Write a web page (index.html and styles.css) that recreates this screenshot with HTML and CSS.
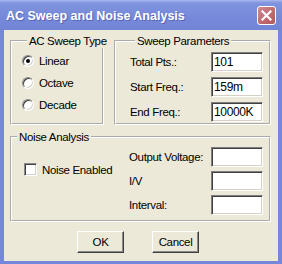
FILE: index.html
```html
<!DOCTYPE html>
<html lang="en">
<head>
    <meta charset="UTF-8">
    <title>AC Sweep and Noise Analysis</title>
    <link rel="stylesheet" href="styles.css">
</head>
<body>

<div class="window">
    <div class="titlebar">
        <span class="title">AC Sweep and Noise Analysis</span>
        <span class="close">
            <svg width="11" height="11" viewBox="0 0 11 11">
                <path d="M1.5 1.5 L9.5 9.5 M9.5 1.5 L1.5 9.5" stroke="#fff" stroke-width="2.2" stroke-linecap="square"/>
            </svg>
        </span>
    </div>

    <div class="client">
        <div class="top-row">
            <fieldset class="group sweep-type">
                <legend>AC Sweep Type</legend>
                <div class="radio-row"><span class="radio checked"></span>Linear</div>
                <div class="radio-row"><span class="radio"></span>Octave</div>
                <div class="radio-row"><span class="radio"></span>Decade</div>
            </fieldset>

            <fieldset class="group sweep-params">
                <legend>Sweep Parameters</legend>
                <div class="field-row"><span>Total Pts.:</span><span class="textbox">101</span></div>
                <div class="field-row"><span>Start Freq.:</span><span class="textbox">159m</span></div>
                <div class="field-row"><span>End Freq.:</span><span class="textbox">10000K</span></div>
            </fieldset>
        </div>

        <fieldset class="group noise">
            <legend>Noise Analysis</legend>
            <div class="noise-body">
                <div class="noise-left"><span class="checkbox"></span>Noise Enabled</div>
                <div class="noise-right">
                    <div class="field-row"><span>Output Voltage:</span><span class="textbox"></span></div>
                    <div class="field-row"><span>I/V</span><span class="textbox"></span></div>
                    <div class="field-row"><span>Interval:</span><span class="textbox"></span></div>
                </div>
            </div>
        </fieldset>

        <div class="buttons">
            <button class="btn">OK</button>
            <button class="btn">Cancel</button>
        </div>
    </div>
</div>

</body>
</html>
```

FILE: styles.css
```css
* {
    box-sizing: border-box;
}

body {
    margin: 0;
    padding: 0;
    font-family: 'Liberation Sans', Arial, sans-serif;
    font-size: 11.5px;
    letter-spacing: -0.35px;
    color: #000;
    white-space: nowrap;
}

.window {
    width: 282px;
    height: 264px;
    background-color: #7487d8;
    display: flex;
    flex-direction: column;
}

.titlebar {
    height: 30px;
    display: flex;
    align-items: center;
    justify-content: space-between;
    padding: 1px 6px 0 6px;
    background: linear-gradient(#a9b8ee 0, #8093de 3px, #7689d9 60%, #7184d6 100%);
}

.title {
    font-weight: bold;
    font-size: 12.5px;
    letter-spacing: 0;
    color: #fff;
    text-shadow: 1px 1px #5666b4;
}

.close {
    width: 19px;
    height: 19px;
    border: 1px solid #fff;
    border-radius: 3px;
    background: linear-gradient(135deg, #d08a92, #c0666f 60%, #b25a62);
    display: flex;
    align-items: center;
    justify-content: center;
}

.client {
    flex: 1;
    margin: 0 4px 3px 4px;
    background-color: #ece9d8;
    padding: 4px 0 0 6px;
}

.top-row {
    display: flex;
    gap: 10px;
    height: 91px;
}

.group {
    margin: 0;
    padding: 0;
    min-width: 0;
    border: 2px groove #fff;
}

.group legend {
    margin-left: 5px;
    padding: 0 2px;
    line-height: 14px;
}

.sweep-type {
    width: 94px;
    padding: 2px 0 0 10px;
}

.radio-row {
    height: 22px;
    display: flex;
    align-items: center;
    gap: 5px;
}

.radio {
    width: 12px;
    height: 12px;
    border-radius: 50%;
    background-color: #fff;
    border: 1px solid;
    border-color: #8a8a8a #fff #fff #8a8a8a;
    box-shadow: inset 1px 1px #404040, inset -1px -1px #d4d0c8;
    display: flex;
    align-items: center;
    justify-content: center;
}

.radio.checked::after {
    content: '';
    width: 4px;
    height: 4px;
    border-radius: 50%;
    background-color: #000;
}

.sweep-params {
    width: 157px;
    padding: 4px 6px 0 14px;
    display: flex;
    flex-direction: column;
    gap: 5px;
}

.field-row {
    height: 20px;
    display: flex;
    align-items: center;
    justify-content: space-between;
}

.textbox {
    width: 52px;
    height: 20px;
    background-color: #fff;
    border: 1px solid;
    border-color: #7f7f7f #fff #fff #7f7f7f;
    box-shadow: inset 1px 1px #404040, inset -1px -1px #d4d0c8;
    padding: 0 0 0 2px;
    line-height: 18px;
    font-size: 12px;
}

.noise {
    margin-top: 5px;
    width: 261px;
    height: 92px;
}

.noise-body {
    display: flex;
    justify-content: space-between;
}

.noise-left {
    padding: 19px 0 0 12px;
    display: flex;
    align-items: center;
    gap: 5px;
    height: 32px;
}

.checkbox {
    width: 13px;
    height: 13px;
    background-color: #fff;
    border: 1px solid;
    border-color: #8a8a8a #fff #fff #8a8a8a;
    box-shadow: inset 1px 1px #404040, inset -1px -1px #d4d0c8;
}

.noise-right {
    width: 140px;
    padding: 3px 6px 0 0;
    display: flex;
    flex-direction: column;
    gap: 4px;
}

.buttons {
    margin: 9px 0 0 67px;
    display: flex;
    gap: 28px;
}

.btn {
    width: 47px;
    height: 22px;
    padding: 0;
    font-family: inherit;
    font-size: 11.5px;
    letter-spacing: -0.35px;
    color: #000;
    background-color: #ece9d8;
    border: 1px solid;
    border-color: #fff #404040 #404040 #fff;
    box-shadow: inset -1px -1px #8a8a8a;
}
```
